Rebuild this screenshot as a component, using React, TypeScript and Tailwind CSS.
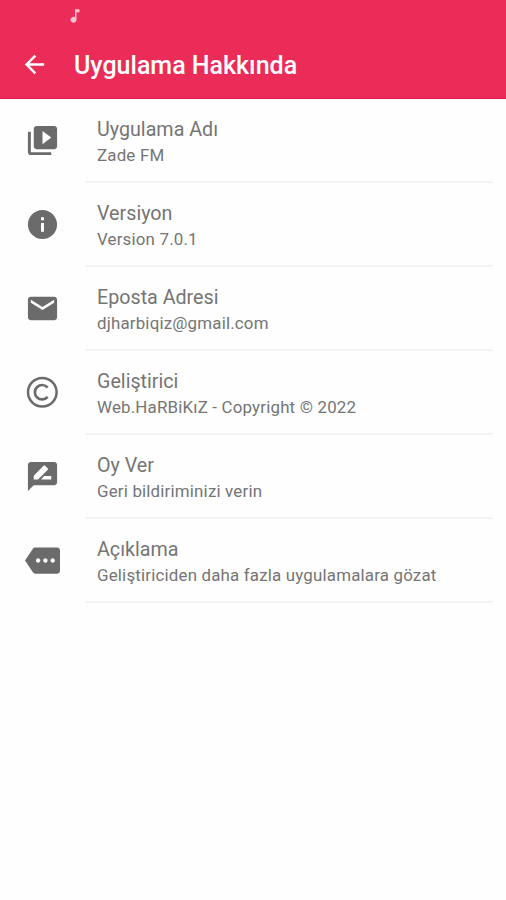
import type { ReactNode } from "react";
import { MdArrowBack, MdEmail, MdInfo, MdMore, MdMusicNote, MdVideoLibrary } from "react-icons/md";

function CopyrightIcon() {
  return (
    <svg viewBox="0 0 35 35" className="h-[35px] w-[35px]" fill="none" stroke="currentColor">
      <circle cx="17.3" cy="17.2" r="14.3" strokeWidth="2.5" />
      <path d="M22.6 12.6A7.2 7.2 0 1 0 22.6 21.8" strokeWidth="2.7" />
    </svg>
  );
}

function ReviewIcon() {
  return (
    <svg viewBox="0 0 24 24" className="h-[35px] w-[35px]">
      <path d="M20 2H4c-1.1 0-2 .9-2 2v18l4-4h14c1.1 0 2-.9 2-2V4c0-1.1-.9-2-2-2z" fill="currentColor" />
      <path d="M6 14v-2.6l6.7-6.7c.3-.3.8-.3 1.1 0l1.7 1.7c.3.3.3.8 0 1.1L8.9 14zM11 14l2.1-2.4H18V14z" fill="#fefefe" />
    </svg>
  );
}

type Item = { icon: ReactNode; title: string; text: string };

const items: Item[] = [
  { icon: <MdVideoLibrary size={35} />, title: "Uygulama Adı", text: "Zade FM" },
  { icon: <MdInfo size={35} />, title: "Versiyon", text: "Version 7.0.1" },
  { icon: <MdEmail size={35} />, title: "Eposta Adresi", text: "djharbiqiz@gmail.com" },
  { icon: <CopyrightIcon />, title: "Geliştirici", text: "Web.HaRBiKıZ - Copyright © 2022" },
  { icon: <ReviewIcon />, title: "Oy Ver", text: "Geri bildiriminizi verin" },
  { icon: <MdMore size={35} />, title: "Açıklama", text: "Geliştiriciden daha fazla uygulamalara gözat" },
];

export default function App() {
  return (
    <div className="h-[900px] w-[506px] overflow-hidden bg-[#fefefe] font-['Roboto',sans-serif] text-[#757575]">
      <header className="h-[99px] border-b border-[#d91c4d] bg-[#eb2b58] text-white">
        <div className="flex h-[31px] items-center pl-[66px] text-[#fbc3d0]">
          <MdMusicNote size={18} />
        </div>
        <div className="flex h-[67px] items-center pl-5">
          <MdArrowBack size={29} />
          <h1 className="ml-[25px] pt-[2px] text-[25px] leading-[30px] font-medium whitespace-nowrap">Uygulama Hakkında</h1>
        </div>
      </header>
      <main>
        {items.map((item) => (
          <section key={item.title} className="flex h-[84px] pl-[25px]">
            <div className="flex h-[83px] w-[60px] shrink-0 items-center text-[#6b6b6b]">{item.icon}</div>
            <div className="mr-[13px] flex-1 border-b-2 border-[#f3f3f3] pt-[18px] pl-3 whitespace-nowrap">
              <h2 className="text-[19.7px] leading-[26px]">{item.title}</h2>
              <p className="text-[16.9px] leading-[24px] tracking-[0.18px]">{item.text}</p>
            </div>
          </section>
        ))}
      </main>
    </div>
  );
}
